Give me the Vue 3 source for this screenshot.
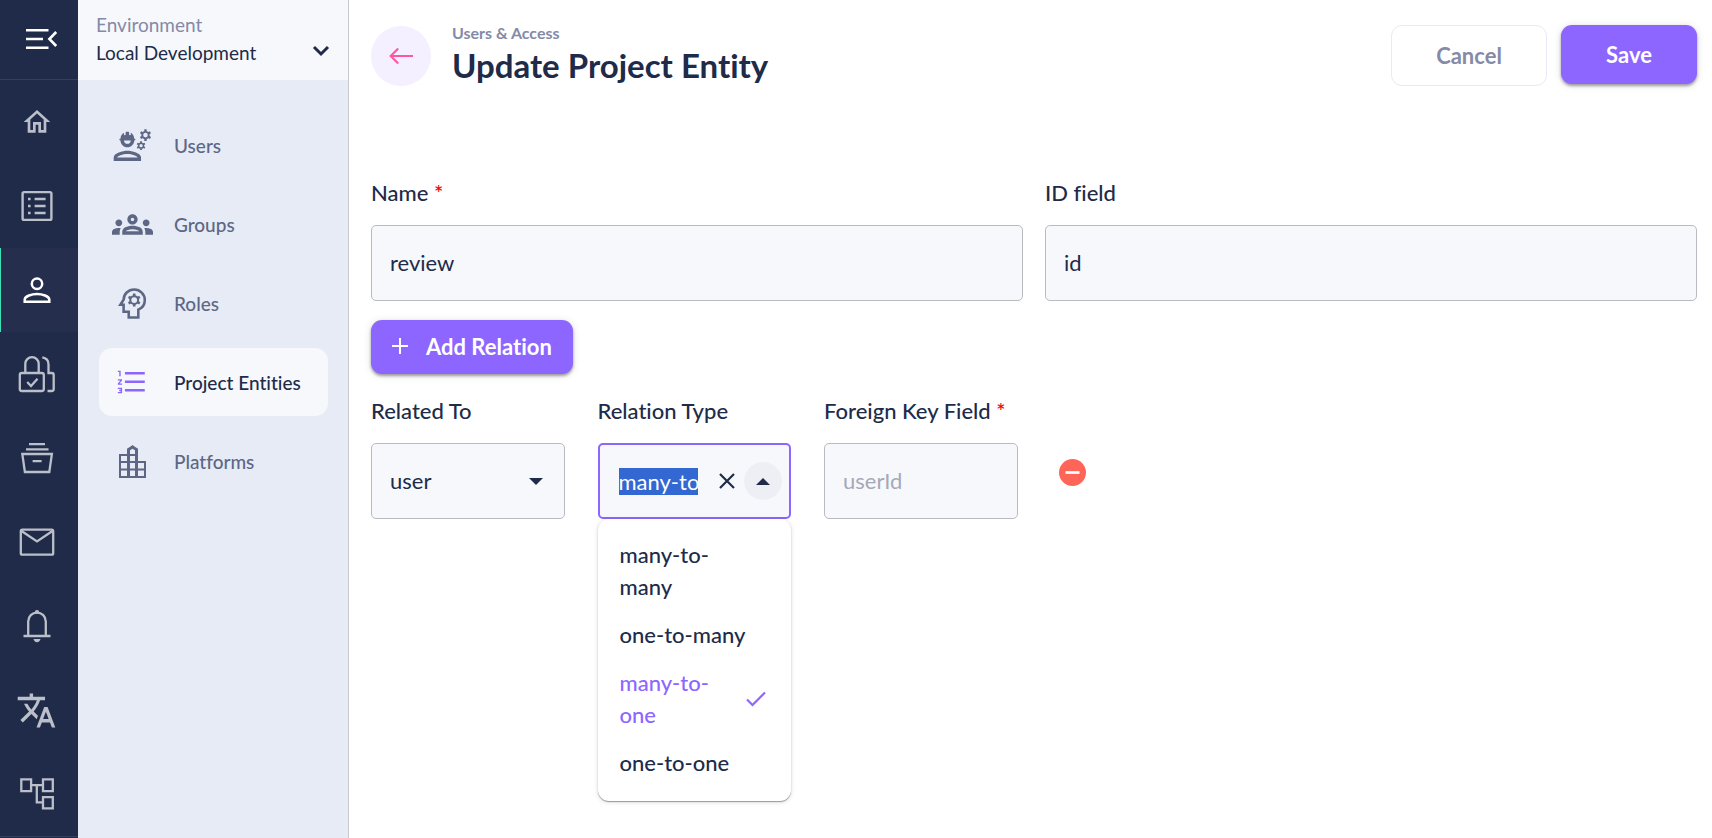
<script setup>
import { ref, onMounted } from 'vue'

const name = ref('review')
const idField = ref('id')
const relatedTo = ref('user')
const relationType = ref('many-to-one')
const foreignKey = ref('')
const relationInput = ref(null)

const options = ['many-to-many', 'one-to-many', 'many-to-one', 'one-to-one']

const rail = [
  { id: 'home', label: 'Home' },
  { id: 'list', label: 'Resources' },
  { id: 'person', label: 'Users and access', active: true },
  { id: 'locks', label: 'Permissions' },
  { id: 'archive', label: 'Storage' },
  { id: 'mail', label: 'Mail' },
  { id: 'bell', label: 'Notifications' },
  { id: 'translate', label: 'Translations' },
  { id: 'tree', label: 'Workflows' },
]

const sections = [
  { id: 'users', label: 'Users' },
  { id: 'groups', label: 'Groups' },
  { id: 'roles', label: 'Roles' },
  { id: 'entities', label: 'Project Entities', active: true },
  { id: 'platforms', label: 'Platforms' },
]

onMounted(() => {
  relationInput.value.focus()
  relationInput.value.select()
  relationInput.value.scrollLeft = 0
})
</script>

<template>
  <div class="app">
    <nav class="rail" aria-label="Main">
      <button class="rail-toggle" type="button" aria-label="Collapse menu">
        <svg width="32" height="22" viewBox="0 0 32 22" fill="none" stroke="currentColor" stroke-width="2.6">
          <path d="M0 2.3h22.5M0 11h17M0 19.7h22.5M30.2 4L23.4 11l6.8 7" />
        </svg>
      </button>
      <a v-for="item in rail" :key="item.id" href="#" class="rail-item" :class="{ active: item.active }" :aria-label="item.label">
        <svg v-if="item.id === 'home'" width="32" height="32" viewBox="0 0 24 24" fill="currentColor">
          <path d="M12 5.69l5 4.5V18h-2v-6H9v6H7v-7.81l5-4.5M12 3L2 12h3v8h6v-6h2v6h6v-8h3L12 3z" />
        </svg>
        <svg v-else-if="item.id === 'list'" width="40" height="40" viewBox="0 0 40 40" fill="none" stroke="currentColor" stroke-width="2.4">
          <rect x="5.6" y="6.1" width="28.8" height="27.8" rx="1.5" />
          <path d="M11 13h2.6M11 20h2.6M11 27h2.6M17.6 13h11M17.6 20h11M17.6 27h11" />
        </svg>
        <svg v-else-if="item.id === 'person'" width="40" height="40" viewBox="0 0 40 40" fill="none" stroke="currentColor" stroke-width="2.5">
          <circle cx="20" cy="13.8" r="5.2" />
          <path d="M7.7 31.7v-2.2c0-3.4 7.3-5.5 12.3-5.5s12.3 2.1 12.3 5.5v2.2z" />
        </svg>
        <svg v-else-if="item.id === 'locks'" width="40" height="40" viewBox="0 0 40 40" fill="none" stroke="currentColor" stroke-width="2.3">
          <rect x="2.8" y="19" width="24" height="18" rx="2" />
          <path d="M8.3 19V9.8a6.7 6.7 0 0 1 13.4 0V19M10.2 28l3.8 4 6.5-7.2M25.3 3.4c3.8.6 6.2 3.4 6.2 7V19h3.2c1.4 0 2 .7 2 2v14c0 1.3-.6 2-2 2h-4.2" />
        </svg>
        <svg v-else-if="item.id === 'archive'" width="40" height="40" viewBox="0 0 40 40" fill="none" stroke="currentColor" stroke-width="2.3">
          <path d="M12 6.2h16M9 11.4h22.5M5.3 16h29.6l-2.6 18H7.9zM15.6 23.2h9" />
        </svg>
        <svg v-else-if="item.id === 'mail'" width="40" height="40" viewBox="0 0 40 40" fill="none" stroke="currentColor" stroke-width="2.3">
          <rect x="3.8" y="7.7" width="32.4" height="25" rx="1.5" />
          <path d="M4.5 9L20 19.4 35.5 9" />
        </svg>
        <svg v-else-if="item.id === 'bell'" width="40" height="40" viewBox="0 0 40 40" fill="none" stroke="currentColor" stroke-width="2.3">
          <path d="M6.5 30h27M11.2 30V15.4a8.8 8.8 0 0 1 17.6 0V30" />
          <path d="M17.8 6.2a2.2 2.2 0 1 1 4.4 0v1.4h-4.4zM16.5 33h7c-.4 2-1.7 3.2-3.5 3.2s-3.1-1.2-3.5-3.2z" fill="currentColor" stroke="none" />
        </svg>
        <svg v-else-if="item.id === 'translate'" width="41" height="41" viewBox="0 0 24 24" fill="currentColor">
          <path d="M12.87 15.07l-2.54-2.51.03-.03c1.74-1.94 2.98-4.17 3.71-6.53H17V4h-7V2H8v2H1v1.99h11.17C11.5 7.92 10.44 9.75 9 11.35 8.07 10.32 7.3 9.19 6.69 8h-2c.73 1.63 1.73 3.17 2.98 4.56l-5.09 5.02L4 19l5-5 3.11 3.11.76-2.04zM18.5 10h-2L12 22h2l1.12-3h4.75L21 22h2l-4.5-12zm-2.62 7l1.62-4.33L19.12 17h-3.24z" />
        </svg>
        <svg v-else width="40" height="40" viewBox="0 0 40 40" fill="none" stroke="currentColor" stroke-width="2.3">
          <path d="M4.3 5.3h9.8v11.8H4.3zM26 5.3h9.8v11.8H26zM26 23.1h9.8v11.2H26zM14.1 11.2H26M19.8 11.2v17.200H26" />
        </svg>
      </a>
      <div class="rail-end"></div>
    </nav>

    <aside class="panel">
      <button class="environment" type="button">
        <span class="environment-text">
          <span class="environment-label">Environment</span>
          <span class="environment-value">Local Development</span>
        </span>
        <svg width="18" height="12" viewBox="0 0 18 12" fill="none" stroke="currentColor" stroke-width="3">
          <path d="M2 2l7 7 7-7" />
        </svg>
      </button>
      <nav class="sections" aria-label="Users and access">
        <a v-for="item in sections" :key="item.id" href="#" class="section" :class="{ active: item.active }">
          <span class="section-icon">
            <svg v-if="item.id === 'users'" width="41" height="41" viewBox="0 0 24 24" fill="currentColor">
              <path d="M9 15c-2.67 0-8 1.34-8 4v2h16v-2c0-2.66-5.33-4-8-4zm-6 4c.22-.72 3.31-2 6-2 2.7 0 5.8 1.29 6 2H3z" />
              <path d="M4.74 9H5c0 2.21 1.79 4 4 4s4-1.79 4-4h.26c.27 0 .49-.22.49-.49v-.02c0-.27-.22-.49-.49-.49H13c0-1.48-.81-2.75-2-3.45v.95c0 .28-.22.5-.5.5s-.5-.22-.5-.5V4.14C9.68 4.06 9.35 4 9 4s-.68.06-1 .14V5.5c0 .28-.22.5-.5.5S7 5.78 7 5.5v-.95C5.81 5.25 5 6.52 5 8h-.26c-.27 0-.49.22-.49.49v.03c0 .26.22.48.49.48zM11 9c0 1.1-.9 2-2 2s-2-.9-2-2h4z" />
              <g fill="none" stroke="currentColor">
                <circle cx="19.6" cy="5.9" r="1.9" stroke-width="1.1" />
                <path stroke-width="1.4" d="M19.6 2.5v1.3M19.6 8v1.3M16.7 4.200l1.100.65M21.400 6.950l1.100.65M16.700 7.600l1.100-.65M21.400 4.850l1.100-.65" />
                <circle cx="17" cy="12.1" r="1.4" stroke-width="0.9" />
                <path stroke-width="1.1" d="M17 9.500v1M17 13.700v1M14.750 10.800l.9.500M18.350 12.900l.9.500M14.750 13.400l.9-.5M18.350 11.300l.9-.5" />
              </g>
            </svg>
            <svg v-else-if="item.id === 'groups'" width="41" height="41" viewBox="0 0 24 24" fill="currentColor">
              <path d="M4 13c1.1 0 2-.9 2-2s-.9-2-2-2-2 .9-2 2 .9 2 2 2zm1.13 1.1c-.37-.06-.74-.1-1.13-.1-.99 0-1.93.21-2.78.58C.48 14.9 0 15.62 0 16.43V18h4.5v-1.61c0-.83.23-1.61.63-2.29zM20 13c1.1 0 2-.9 2-2s-.9-2-2-2-2 .9-2 2 .9 2 2 2zm4 3.43c0-.81-.48-1.53-1.22-1.85-.85-.37-1.79-.58-2.78-.58-.39 0-.76.04-1.13.1.4.68.63 1.46.63 2.29V18H24v-1.57zm-7.76-2.78c-1.17-.52-2.61-.9-4.24-.9-1.63 0-3.07.39-4.24.9C6.68 14.13 6 15.21 6 16.39V18h12v-1.61c0-1.18-.68-2.26-1.76-2.74zM8.07 16c.09-.23.13-.39.91-.69.97-.38 1.99-.56 3.02-.56s2.05.18 3.02.56c.77.3.81.46.91.69H8.07zM12 8c.55 0 1 .45 1 1s-.45 1-1 1-1-.45-1-1 .45-1 1-1m0-2c-1.66 0-3 1.34-3 3s1.34 3 3 3 3-1.34 3-3-1.34-3-3-3z" />
            </svg>
            <svg v-else-if="item.id === 'roles'" width="41" height="41" viewBox="0 0 24 24" fill="none" stroke="currentColor" stroke-width="1.5">
              <path d="M13 3.8C9.5 3.8 6.8 6.5 6.8 9.8L4.9 12.7h1.9v4.1H9.8v3.4h5.6v-4.6c2.3-.9 3.8-3.2 3.8-5.6 0-3.4-2.8-6.2-6.2-6.2z" />
              <circle cx="13" cy="10" r="2.3" stroke-width="1.2" />
              <path stroke-width="1.5" d="M13 6.2v1.5M13 12.3v1.5M9.7 8.1l1.3.75M15 11.150l1.300.75M9.700 11.900l1.300-.75M15 8.850l1.300-.75" />
            </svg>
            <svg v-else-if="item.id === 'entities'" width="34" height="34" viewBox="0 0 24 24" fill="currentColor">
              <path d="M2 17h2v.5H3v1h1v.5H2v1h3v-4H2v1zm1-9h1V4H2v1h1v3zm-1 3h1.8L2 13.1v.9h3v-1H3.2L5 10.9V10H2v1zm5-6v1.7h14V5H7zm0 13.7h14v-1.7H7v1.7zm0-6h14v-1.7H7v1.7z" />
            </svg>
            <svg v-else width="41" height="41" viewBox="0 0 41 41" fill="none" stroke="currentColor" stroke-width="2">
              <path d="M16.5 36H8V14h8.5M24.5 21H33v15h-8.5M8 21h25M8 28.5h25M8 36h25" />
              <path d="M16.5 36V8.5l4-2.5 4 2.5V36" stroke-width="3" />
              <path d="M16.5 14h8" />
              <path d="M18 7l2.5-3L23 7z" fill="currentColor" stroke="none" />
            </svg>
          </span>
          <span>{{ item.label }}</span>
        </a>
      </nav>
    </aside>

    <main class="main">
      <header class="header">
        <button class="back" type="button" aria-label="Back">
          <svg width="24" height="18" viewBox="0 0 24 18" fill="none" stroke="currentColor" stroke-width="2.1">
            <path d="M24 9H1.8M9.2 1.5L1.7 9l7.5 7.5" />
          </svg>
        </button>
        <div class="titles">
          <div class="crumb">Users &amp; Access</div>
          <h1>Update Project Entity</h1>
        </div>
        <button class="cancel" type="button">Cancel</button>
        <button class="primary save" type="button">Save</button>
      </header>

      <form class="form" @submit.prevent>
        <div class="details">
          <div class="field">
            <label for="name">Name <span class="required">*</span></label>
            <input id="name" v-model="name" class="control" type="text" />
          </div>
          <div class="field">
            <label for="id-field">ID field</label>
            <input id="id-field" v-model="idField" class="control" type="text" />
          </div>
        </div>

        <button class="primary add" type="button">
          <svg width="16" height="16" viewBox="0 0 16 16" fill="none" stroke="currentColor" stroke-width="2">
            <path d="M8 0v16M0 8h16" />
          </svg>
          <span>Add Relation</span>
        </button>

        <div class="relation">
          <div class="field">
            <label for="related-to">Related To</label>
            <div class="select-wrap">
              <select id="related-to" v-model="relatedTo" class="control">
                <option value="user">user</option>
              </select>
              <svg class="select-caret" width="14" height="7" viewBox="0 0 14 7" fill="currentColor"><path d="M0 0h14L7 7z" /></svg>
            </div>
          </div>

          <div class="field">
            <label for="relation-type">Relation Type</label>
            <div class="combo">
              <div class="control combo-control">
                <input id="relation-type" ref="relationInput" v-model="relationType" type="text" role="combobox" aria-expanded="true" aria-controls="relation-options" />
                <button class="clear" type="button" aria-label="Clear">
                  <svg width="16" height="16" viewBox="0 0 16 16" fill="none" stroke="currentColor" stroke-width="2.2"><path d="M1 1l14 14M15 1L1 15" /></svg>
                </button>
                <button class="toggle" type="button" aria-label="Close">
                  <svg width="14" height="7" viewBox="0 0 14 7" fill="currentColor"><path d="M0 7h14L7 0z" /></svg>
                </button>
              </div>
              <ul id="relation-options" class="options" role="listbox" aria-label="Relation Type">
                <li v-for="option in options" :key="option" role="option" class="option" :class="{ selected: option === 'many-to-one' }" :aria-selected="option === 'many-to-one'">
                  <span class="option-text">{{ option }}</span>
                  <svg v-if="option === 'many-to-one'" width="20" height="16" viewBox="0 0 20 16" fill="none" stroke="currentColor" stroke-width="2.2"><path d="M1 8.5l5.5 5.5L19 1.5" /></svg>
                </li>
              </ul>
            </div>
          </div>

          <div class="field">
            <label for="foreign-key">Foreign Key Field <span class="required">*</span></label>
            <input id="foreign-key" v-model="foreignKey" class="control" type="text" placeholder="userId" />
          </div>

          <button class="remove" type="button" aria-label="Remove relation">
            <svg width="27" height="27" viewBox="0 0 27 27"><circle cx="13.5" cy="13.5" r="13.5" fill="#ff6459" /><path d="M6.5 13.5h14" stroke="#fff" stroke-width="2.7" /></svg>
          </button>
        </div>
      </form>
    </main>
  </div>
</template>

<style>
body {
  margin: 0;
  background: #fff;
}
</style>

<style scoped>
.app {
  display: flex;
  min-height: 100vh;
  font-family: Lato, "Open Sans", sans-serif;
  font-size: 22px;
  font-variant-ligatures: none;
  color: #202b49;
}
.app *,
.app *::before {
  box-sizing: border-box;
}
button,
input,
select {
  font: inherit;
  font-variant-ligatures: none;
  color: inherit;
}
button {
  border: 0;
  padding: 0;
  background: none;
  cursor: pointer;
}
a {
  color: inherit;
  text-decoration: none;
}
svg {
  display: block;
  flex: none;
}

.rail {
  display: flex;
  flex-direction: column;
  flex: none;
  width: 78px;
  height: 100vh;
  overflow: hidden;
  background: #202b49;
  color: #bbbfc9;
}
.rail-toggle {
  display: flex;
  align-items: center;
  justify-content: center;
  flex: none;
  height: 80px;
  padding: 0 0 2px 5px;
  border-bottom: 1px solid #36405c;
  color: #fff;
}
.rail-item {
  display: flex;
  align-items: center;
  justify-content: center;
  flex: none;
  height: 84px;
  padding-right: 6px;
  border-left: 1px solid transparent;
}
.rail-item.active {
  border-left-color: #3ce0b5;
  background: #252f4d;
  color: #fff;
}
.rail-end {
  border-top: 1px solid #36405c;
}

.panel {
  flex: none;
  width: 271px;
  border-right: 1px solid #c8cad0;
  background: #e6ebf5;
}
.environment {
  display: flex;
  align-items: flex-end;
  justify-content: space-between;
  width: 100%;
  height: 80px;
  padding: 0 18px 13px;
  background: #f7f8fc;
  font-size: 19px;
  line-height: 28px;
  text-align: left;
}
.environment svg {
  margin-bottom: 10px;
}
.environment-text {
  display: flex;
  flex-direction: column;
}
.environment-label {
  color: #858aa6;
}
.sections {
  display: flex;
  flex-direction: column;
  gap: 11px;
  padding: 31px 20px 0 21px;
}
.section {
  display: flex;
  align-items: center;
  height: 68px;
  padding-left: 12px;
  gap: 21px;
  border-radius: 13px;
  color: #5d6785;
  font-size: 19px;
  font-weight: 500;
}
.section-icon {
  display: flex;
  justify-content: center;
  width: 42px;
}
.section.active {
  background: #f7f8fc;
  color: #202b49;
}
.section.active .section-icon {
  color: #8c66ff;
}

.main {
  flex: 1;
  min-width: 0;
  padding: 25px 15px 24px 22px;
}
.header {
  display: flex;
  align-items: flex-start;
}
.back {
  display: flex;
  align-items: center;
  justify-content: center;
  width: 60px;
  height: 60px;
  margin: 1px 21px 0 0;
  border-radius: 50%;
  background: #f4f0ff;
  color: #ff56a3;
}
.titles {
  flex: 1;
}
.crumb {
  color: #858aa6;
  font-size: 16px;
  font-weight: 700;
  line-height: 16px;
}
h1 {
  margin: 0;
  font-size: 33px;
  font-weight: 700;
  line-height: 48px;
}
.cancel {
  width: 156px;
  height: 61px;
  margin-right: 14px;
  border: 1px solid #e9eaf6;
  border-radius: 11px;
  color: #858aa6;
  font-weight: 700;
}
.primary {
  border-radius: 11px;
  background: #8c66ff;
  color: #fff;
  font-weight: 700;
  box-shadow: 0 2px 3px rgba(0, 0, 0, 0.35), 0 1px 8px rgba(0, 0, 0, 0.12);
}
.save {
  width: 136px;
  height: 59px;
}

.form {
  padding-top: 91px;
}
.details {
  display: grid;
  grid-template-columns: 1fr 1fr;
  gap: 22px;
}
.field {
  display: flex;
  flex-direction: column;
  gap: 19px;
  min-width: 0;
}
label {
  font-weight: 500;
  line-height: 26px;
  white-space: nowrap;
}
.required {
  color: #f00;
}
.control {
  width: 100%;
  height: 76px;
  padding: 0 18px 2px;
  border: 1px solid #b9bbc1;
  border-radius: 5px;
  outline: 0;
  background: #f7f8fc;
}
.control::placeholder {
  color: #a5a9b7;
  opacity: 1;
}
.add {
  display: flex;
  align-items: center;
  gap: 18px;
  height: 54px;
  margin-top: 19px;
  padding: 0 21px 2px;
}
.relation {
  display: grid;
  grid-template-columns: repeat(6, 1fr);
  gap: 33px;
  margin-top: 24px;
}
.select-wrap,
.combo {
  position: relative;
}
select.control {
  appearance: none;
}
.select-caret {
  position: absolute;
  top: 35px;
  right: 22px;
  pointer-events: none;
}
.combo-control {
  display: flex;
  align-items: center;
  padding: 0 7px 0 19px;
  border: 2px solid #8c66ff;
}
.combo-control input {
  flex: 1;
  min-width: 0;
  height: 30px;
  padding: 0;
  border: 0;
  outline: 0;
  background: none;
}
.combo-control input::selection {
  background: #3367d1;
  color: #fff;
}
.clear {
  padding: 6px;
  margin-left: 15px;
}
.toggle {
  display: flex;
  align-items: center;
  justify-content: center;
  flex: none;
  width: 38px;
  height: 38px;
  margin-left: 3px;
  border-radius: 50%;
  background: #eeeff4;
}
.options {
  position: absolute;
  top: 100%;
  right: 0;
  left: 0;
  margin: 0;
  padding: 12px 0 14px;
  border-radius: 11px;
  background: #fff;
  box-shadow: 0 1px 1px rgba(0, 0, 0, 0.35), 0 1px 5px rgba(0, 0, 0, 0.14);
  list-style: none;
}
.option {
  display: flex;
  align-items: center;
  justify-content: space-between;
  padding: 8px 25px 8px 22px;
  font-weight: 500;
  line-height: 32px;
}
.option-text {
  padding-right: 12px;
}
.option.selected {
  color: #8c66ff;
}
.remove {
  align-self: start;
  justify-self: start;
  margin: 61px 0 0 8px;
}
</style>
